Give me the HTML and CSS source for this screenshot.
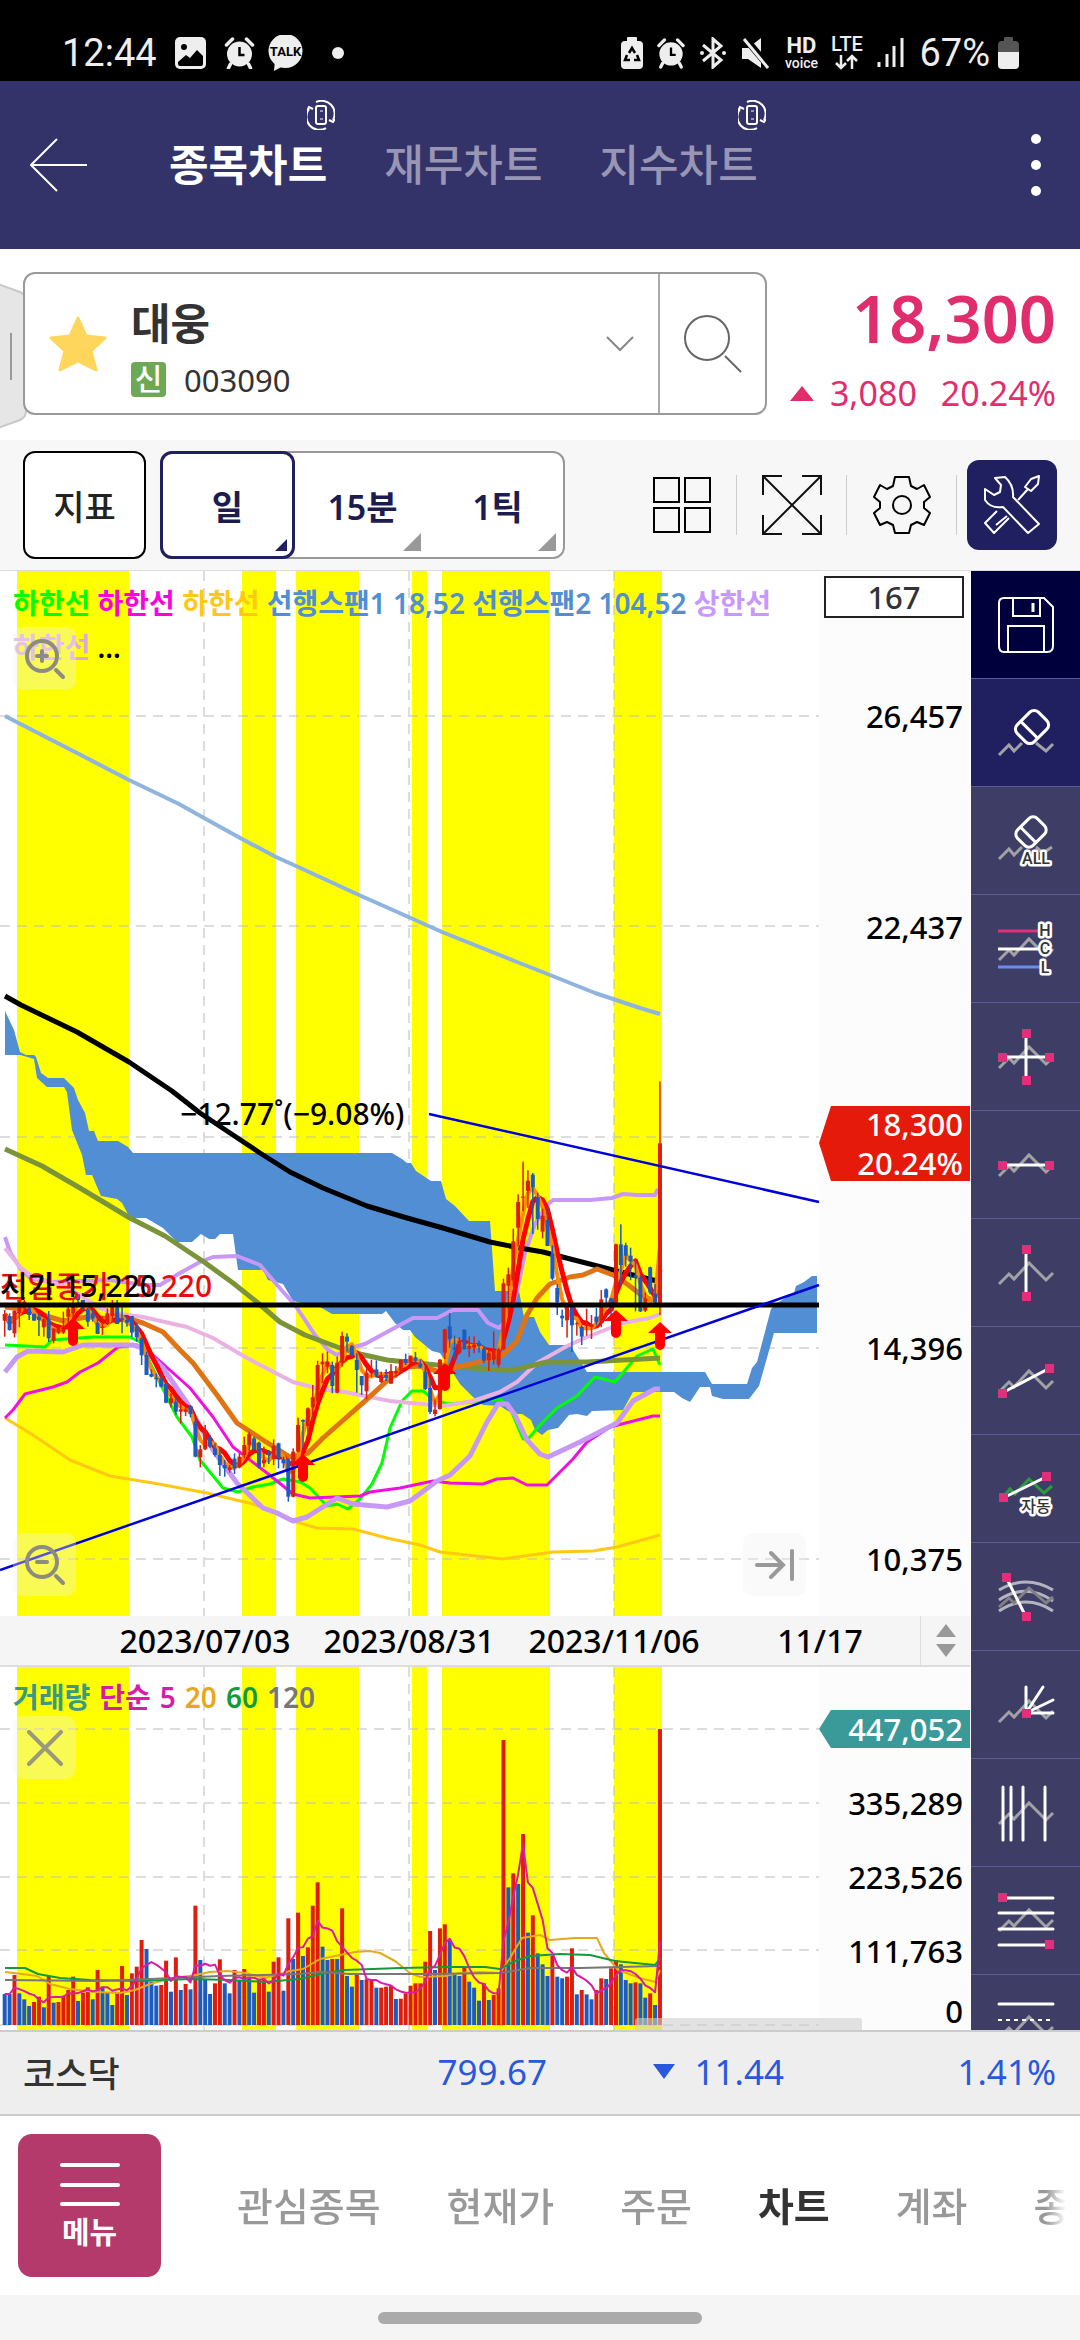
FILE: index.html
```html
<!DOCTYPE html>
<html lang="ko">
<head>
    <meta charset="UTF-8">
    <meta name="viewport" content="width=device-width, initial-scale=1.0">
    <title>종목차트</title>
    <link rel="stylesheet" href="styles.css">
</head>
<body>

    <!-- Shared icon shapes -->
    <svg class="defs" aria-hidden="true">
        <symbol id="alarm" viewBox="0 0 30 32">
            <circle cx="15" cy="17" r="12.5" fill="#eee"/>
            <path d="M2 8 8 2M28 8 22 2M6 27 4 31M24 27 26 31" stroke="#eee" stroke-width="3.5" stroke-linecap="round"/>
            <path d="M15 10V18H20" fill="none" stroke="#000" stroke-width="2.5"/>
        </symbol>
        <symbol id="rotate" viewBox="0 0 28 30">
            <g fill="none" stroke="#fff" stroke-width="2">
                <rect x="9" y="6" width="10" height="18" rx="2"/>
                <path d="M9 2A13 13 0 0 1 26 20M19 28A13 13 0 0 1 2 9M0 11 2 7 6 9M28 19 26 22 22 20"/>
                <path d="M13 11h3M13 19h3" stroke-width="1"/>
            </g>
        </symbol>
        <symbol id="zig" viewBox="0 0 56 56" overflow="visible">
            <path d="M1 39 11 29 16 34 31 18 48 35 55 28" fill="none" stroke="#a2a2a6" stroke-width="3"/>
        </symbol>
        <symbol id="dot" viewBox="0 0 9 9"><rect width="9" height="9" fill="#e0307a"/></symbol>
    </svg>

    <div class="status-bar">
        <span class="clock">12:44</span>
        <svg width="31" height="32" viewBox="0 0 31 32"><rect width="31" height="32" rx="5" fill="#eee"/><circle cx="9" cy="10" r="3" fill="#000"/><path d="M3 25 11 18 15 21 22 13 28 19V27Q28 29 26 29H5Q3 29 3 27Z" fill="#000"/></svg>
        <svg class="gap-wide" width="31" height="32"><use href="#alarm"/></svg>
        <svg width="37" height="36" viewBox="0 0 37 36"><circle cx="18.500" cy="16" r="17" fill="#eee"/><path d="M8 25 7 36 18 30Z" fill="#eee"/><text x="18.500" y="21" text-anchor="middle" font-family="Roboto" font-size="13" font-weight="700" fill="#000">TALK</text></svg>
        <svg class="gap-dot" width="12" height="12"><circle cx="6" cy="6" r="6" fill="#eee"/></svg>

        <div class="status-right">
            <svg width="22" height="32" viewBox="0 0 22 32"><path d="M6 4V1Q6 0 7 0H15Q16 0 16 1V4H18Q22 4 22 8V28Q22 32 18 32H4Q0 32 0 28V8Q0 4 4 4Z" fill="#eee"/><path d="M8 16 11 11 14 16M16 18 18 23H13M9 23H4L6 18" fill="none" stroke="#000" stroke-width="2.500"/></svg>
            <svg width="28" height="32"><use href="#alarm"/></svg>
            <svg width="28" height="32" viewBox="0 0 28 32"><path d="M4 8 22 23 14 30V2L22 9 4 24" fill="none" stroke="#eee" stroke-width="3"/><circle cx="3" cy="16" r="2" fill="#eee"/><circle cx="25" cy="16" r="2" fill="#eee"/></svg>
            <svg width="30" height="32" viewBox="0 0 30 32"><path d="M1 11H7L20 1V31L7 22H1Z" fill="#eee"/><path d="M3 0 29 31" stroke="#000" stroke-width="7"/><path d="M3 2 27 31" stroke="#eee" stroke-width="3"/></svg>
            <span class="hd"><b>HD</b><small>voice</small></span>
            <svg width="32" height="36" viewBox="0 0 32 36" overflow="visible"><text x="16" y="16" text-anchor="middle" font-family="Roboto" font-size="20" font-weight="500" fill="#eee">LTE</text><path d="M10 20V33M5 28 10 33 15 28M21 34V21M16 26 21 21 26 26" fill="none" stroke="#eee" stroke-width="2.500"/></svg>
            <svg width="28" height="32" viewBox="0 0 28 32"><path d="M2 25V30M10 17V30M17 9V30M25 1V30" stroke="#eee" stroke-width="3"/></svg>
            <span class="clock">67%</span>
            <svg width="21" height="32" viewBox="0 0 21 32"><path d="M6 4V1Q6 0 7 0H14Q15 0 15 1V4H17Q21 4 21 8V15H0V8Q0 4 4 4Z" fill="#555"/><path d="M0 15H21V28Q21 32 17 32H4Q0 32 0 28Z" fill="#eee"/></svg>
        </div>
    </div>

    <header class="header">
        <button class="icon-btn" aria-label="뒤로"><svg width="58" height="54" viewBox="0 0 58 54"><path d="M27 1 1 27 27 53M1 27H57" fill="none" stroke="#fff" stroke-width="2"/></svg></button>
        <nav class="tabs">
            <a href="#" class="tab active">종목차트<svg class="rotate" width="28" height="30"><use href="#rotate"/></svg></a>
            <a href="#" class="tab">재무차트</a>
            <a href="#" class="tab">지수차트<svg class="rotate" width="28" height="30"><use href="#rotate"/></svg></a>
        </nav>
        <button class="icon-btn more" aria-label="더보기"><svg width="12" height="64" viewBox="0 0 12 64"><g fill="#fff"><circle cx="6" cy="6" r="5"/><circle cx="6" cy="32" r="5"/><circle cx="6" cy="58" r="5"/></g></svg></button>
    </header>

    <section class="stock">
        <svg class="drawer" width="27" height="146" viewBox="0 0 27 146"><path d="M-2 1 20 9Q26 12 26 18V128Q26 134 20 137L-2 145Z" fill="#e6e6e6" stroke="#c8c8c8" stroke-width="2"/><path d="M11 50V97" stroke="#999" stroke-width="2"/></svg>
        <div class="stock-box">
            <button class="icon-btn star" aria-label="관심종목"><svg width="60" height="58" viewBox="0 0 60 58"><path d="M30 3 38 21 57 23 43 36 48 55 30 46 12 55 17 36 3 23 22 21Z" fill="#ffd65c" stroke="#ffd65c" stroke-width="3" stroke-linejoin="round"/></svg></button>
            <div class="stock-name">
                <strong>대웅</strong>
                <span><em>신</em>003090</span>
            </div>
            <button class="icon-btn chevron" aria-label="종목 목록"><svg width="28" height="16" viewBox="0 0 28 16"><path d="M1 1 14 14 27 1" fill="none" stroke="#888" stroke-width="2"/></svg></button>
            <button class="icon-btn search" aria-label="검색"><svg width="60" height="60" viewBox="0 0 60 60"><circle cx="24" cy="24" r="22" fill="none" stroke="#666" stroke-width="2"/><path d="M42 42 58 58" stroke="#666" stroke-width="2"/></svg></button>
        </div>
        <div class="price">
            <strong>18,300</strong>
            <span><svg width="24" height="15"><path d="M0 15 12 0 24 15Z" fill="#e02d6e"/></svg><i>3,080</i><i>20.24%</i></span>
        </div>
    </section>

    <section class="toolbar">
        <button class="btn-index">지표</button>
        <div class="periods">
            <button class="active">일</button>
            <button>15분</button>
            <button>1틱</button>
        </div>
        <div class="tool-icons">
            <button aria-label="분할"><svg width="58" height="58" viewBox="0 0 58 58"><path d="M1 2H26V26H1ZM32 2H57V26H32ZM1 32H26V56H1ZM32 32H57V56H32Z" fill="none" stroke="#000" stroke-width="2"/></svg></button>
            <button aria-label="전체화면"><svg width="60" height="60" viewBox="0 0 60 60"><path d="M1 20V1H20M40 1H59V20M59 40V59H40M20 59H1V40M1 1 59 59M59 1 1 59" fill="none" stroke="#111" stroke-width="2"/></svg></button>
            <button aria-label="설정"><svg width="58" height="60" viewBox="0 0 58 60"><path d="M22 2H36L38 11 44 14 51 10 57 22 51 27V33L57 38 51 50 44 47 38 50 36 58H22L20 50 14 47 7 50 1 38 7 33V27L1 22 7 10 14 14 20 11Z" fill="none" stroke="#000" stroke-width="2" stroke-linejoin="round"/><circle cx="29" cy="30" r="9" fill="none" stroke="#000" stroke-width="2"/></svg></button>
        </div>
        <button class="btn-tools" aria-label="도구"><svg width="58" height="60" viewBox="0 0 58 60"><g fill="none" stroke="#fff" stroke-width="2" stroke-linejoin="round"><path d="M12 3 22 2Q31 10 30 22L56 49 45 58 20 32Q8 34 2 25V14L11 20 17 17 18 10Z"/><path d="M48 4 56 1 55 9 48 16 42 12ZM45 14 35 25M14 36 2 48 11 58 26 43M24 41 13 50"/></g></svg></button>
    </section>

    <main class="workspace">
        <div class="charts">
            <div class="pane">
                <svg class="chart" id="priceChart" viewBox="0 571 970 1045">
                    <rect x="819" y="571" width="151" height="1045" fill="#fcfcfc"/>
                    <g class="bands"></g>
                    <g class="grid">
                        <path d="M0 716H819M0 926H819M0 1137H819M0 1348H819M0 1559H819M204 571V1616M409 571V1616M614 571V1616"/>
                    </g>
                    <!-- cloud -->
                    <path fill="#518ed4" d="M5 1011 14 1030 20 1052 26 1055 34 1055 36 1057 41 1073 48 1078 64 1078 74 1088 78 1100 85 1113 89 1131 94 1131 98 1141 118 1141 128 1147 133 1153 392 1153 402 1159 407 1163 411 1163 416 1171 431 1181 441 1181 446 1199 455 1206 469 1221 490 1221 495 1291 519 1291 524 1317 534 1317 540 1332 549 1345 570 1345 587 1372 705 1372 712 1384 747 1384 752 1368 757 1362 771 1309 777 1303 794 1293 796 1286 804 1282 812 1276 817 1276 817 1333 774 1333 759 1386 749 1399 723 1399 712 1396 710 1387 700 1387 690 1402 682 1398 674 1392 633 1392 623 1410 592 1411 587 1416 577 1414 569 1415 558 1428 548 1430 542 1435 535 1430 531 1420 522 1414 513 1414 500 1406 483 1405 473 1397 460 1384 453 1373 440 1353 432 1351 415 1337 410 1330 403 1330 395 1323 386 1311 382 1314 332 1314 320 1307 293 1301 283 1284 268 1280 263 1270 238 1270 233 1234 220 1234 215 1239 209 1239 201 1234 192 1242 177 1242 163 1228 146 1218 130 1218 122 1203 117 1199 101 1196 92 1175 86 1175 82 1155 72 1130 68 1100 67 1092 64 1087 47 1087 37 1078 34 1059 24 1056 20 1055 5 1055Z"/>
                    <g class="lines">
                        <polyline stroke="#8fb4dd" stroke-width="4" points="5,716 38,733 77,753 129,780 179,804 204,818 242,839 276,857 296,866 359,895 413,919 442,932 517,962 540,971 595,993 640,1008 660,1014"/>
                        <polyline stroke="#ffc814" stroke-width="3" points="5,1418 33,1435 70,1460 110,1476 153,1483 207,1493 253,1504 277,1513 293,1521 317,1528 353,1529 387,1538 420,1545 440,1552 503,1559 553,1552 593,1551 617,1547 660,1535"/>
                        <polyline stroke="#00ff00" stroke-width="3" points="5,1345 45,1347 52,1340 93,1337 130,1337 140,1342 157,1377 177,1417 192,1437 200,1460 223,1488 238,1492 253,1487 270,1484 283,1479 300,1482 310,1488 327,1506 337,1504 348,1509 360,1499 372,1484 382,1463 390,1428 402,1401 412,1391 423,1391 433,1399 447,1404 473,1402 500,1399 510,1408 523,1439 528,1439 540,1425 557,1408 577,1396 595,1377 615,1382 637,1356 653,1349 660,1365"/>
                        <polyline stroke="#f010e0" stroke-width="3" points="5,1418 13,1410 25,1394 53,1387 67,1382 80,1372 98,1363 118,1347 137,1345 153,1355 190,1388 213,1417 233,1447 267,1473 293,1494 310,1498 360,1496 370,1492 400,1488 433,1481 450,1483 483,1484 497,1479 513,1478 527,1485 547,1485 573,1459 587,1442 610,1427 653,1416 660,1416"/>
                        <polyline stroke="#c898f6" stroke-width="4" points="5,1237 10,1252 20,1268 30,1278 50,1282 110,1280 143,1285 160,1285 180,1273 200,1262 213,1257 237,1256 260,1265 277,1285 295,1305 315,1335 328,1350 337,1355 350,1348 365,1344 387,1332 413,1318 437,1318 453,1310 478,1310 488,1323 499,1328 507,1320 517,1291 525,1253 535,1224 547,1205 553,1200 590,1200 612,1198 623,1194 637,1195 655,1195 658,1189"/>
                        <polyline stroke="#c898f6" stroke-width="5" points="5,1372 17,1357 28,1351 63,1352 83,1345 133,1345 143,1348 163,1368 187,1403 213,1450 237,1483 263,1508 277,1513 293,1521 307,1517 337,1498 353,1504 387,1507 410,1501 437,1481 450,1475 470,1456 487,1422 498,1404 507,1404 515,1415 527,1440 540,1454 548,1457 580,1442 617,1423 633,1401 655,1389 660,1389"/>
                        <polyline stroke="#eab2e2" stroke-width="4" points="5,1248 20,1267 33,1277 67,1287 100,1308 113,1313 143,1317 187,1327 213,1338 247,1358 293,1382 320,1389 345,1392 390,1401 443,1406 473,1401 500,1392 517,1382 537,1363 567,1346 587,1337 623,1323 650,1318 660,1314"/>
                        <polyline stroke="#7b9438" stroke-width="5" points="5,1149 42,1166 80,1188 130,1218 165,1236 204,1262 233,1283 258,1303 280,1322 305,1335 340,1348 360,1354 387,1360 417,1363 457,1367 500,1370 513,1370 547,1362 587,1362 660,1358"/>
                        <polyline stroke="#000" stroke-width="5" points="5,996 21,1005 77,1032 129,1062 172,1091 200,1113 230,1133 260,1153 290,1172 323,1188 367,1206 407,1218 443,1228 490,1242 520,1248 543,1252 613,1270 657,1281"/>
                        <polyline stroke="#e07414" stroke-width="5" points="5,1307 23,1309 43,1315 63,1321 87,1317 133,1320 143,1323 163,1332 180,1350 193,1363 217,1395 237,1423 263,1440 290,1457 308,1453 323,1438 340,1423 365,1401 388,1380 407,1367 420,1366 440,1372 457,1367 483,1361 503,1355 517,1341 527,1315 537,1298 550,1284 570,1277 583,1275 597,1269 613,1275 627,1284 640,1294 653,1301"/>
                        <polyline id="ma5" stroke="#ff0000" stroke-width="5"/>
                    </g>
                    <polyline id="ma3" class="overlay-line" stroke="#ff8c00" stroke-width="4"/>
                    <g id="candles"></g>
                    <path d="M0 1305H819" stroke="#000" stroke-width="5"/>
                    <path d="M0 1570 819 1285M429 1114 819 1202" stroke="#0000d8" stroke-width="2.500"/>
                    <g id="arrows" fill="#ff0000"></g>
                    <g class="note-text">
                        <text x="0" y="1297" fill="#e80c0c">전일종가 15,220</text>
                        <text x="0" y="1297">시가 15,220</text>
                        <text x="180" y="1125">−12.77˚(−9.08%)</text>
                    </g>
                    <g class="axis-text">
                        <text x="963" y="728">26,457</text>
                        <text x="963" y="939">22,437</text>
                        <text x="963" y="1360">14,396</text>
                        <text x="963" y="1571">10,375</text>
                    </g>
                    <path d="M819 1143 831 1106H970V1181H831Z" fill="#e61a0a"/>
                    <g class="axis-text" fill="#fff">
                        <text x="963" y="1136">18,300</text>
                        <text x="963" y="1175">20.24%</text>
                    </g>
                </svg>
                <p class="legend">
                    <span class="c-green">하한선</span> <span class="c-magenta">하한선</span> <span class="c-gold">하한선</span> <span class="c-blue">선행스팬1 18,52 선행스팬2 104,52</span> <span class="c-purple">상한선</span><br>
                    <span class="c-pink">하한선</span> ...
                </p>
                <input class="bar-count" type="text" value="167" aria-label="봉 개수">
                <button class="float-btn zoom-in" aria-label="확대"><svg width="44" height="44" viewBox="0 0 44 44"><g fill="none" stroke="#8c8c80" stroke-width="4" stroke-linecap="round"><circle cx="19" cy="19" r="15"/><path d="M33 33 40 40M14 19H24M19 14V24"/></g></svg></button>
                <button class="float-btn zoom-out" aria-label="축소"><svg width="44" height="44" viewBox="0 0 44 44"><g fill="none" stroke="#8c8c80" stroke-width="4" stroke-linecap="round"><circle cx="19" cy="19" r="15"/><path d="M33 33 40 40M14 19H24"/></g></svg></button>
                <button class="float-btn to-end" aria-label="끝으로"><svg width="40" height="32" viewBox="0 0 40 32"><path d="M2 16H28M16 4 28 16 16 28M37 2V30" fill="none" stroke="#999" stroke-width="4" stroke-linecap="round"/></svg></button>
            </div>

            <div class="dates">
                <svg class="chart" viewBox="0 0 970 50">
                    <g class="date-text">
                        <text x="205" y="37">2023/07/03</text>
                        <text x="409" y="37">2023/08/31</text>
                        <text x="614" y="37">2023/11/06</text>
                        <text x="820" y="37">11/17</text>
                    </g>
                </svg>
                <button class="spin" aria-label="높이 조절"><svg width="20" height="34" viewBox="0 0 20 34"><path d="M0 13 10 0 20 13ZM0 20H20L10 33Z" fill="#999"/></svg></button>
            </div>

            <div class="pane">
                <svg class="chart" id="volumeChart" viewBox="0 1667 970 363">
                    <rect x="819" y="1667" width="151" height="363" fill="#fcfcfc"/>
                    <g class="bands"></g>
                    <g class="grid">
                        <path d="M0 1729H819M0 1803H819M0 1877H819M0 1950H819M0 2025H819M204 1667V2031M409 1667V2031M614 1667V2031"/>
                    </g>
                    <g id="volumes"></g>
                    <g class="lines">
                        <polyline stroke="#e8a81e" stroke-width="2" points="5,1972 22,1974 37,1976 50,1984 70,1989 95,1992 120,1993 135,1990 150,1984 165,1980 195,1975 210,1972 228,1971 245,1973 265,1978 290,1971 303,1969 320,1959 340,1955 355,1952 370,1951 380,1953 395,1961 410,1973 420,1977 445,1976 460,1973 480,1972 500,1973 510,1958 522,1938 540,1935 550,1940 575,1938 597,1938 604,1953 618,1970 640,1978 655,1982 660,1970"/>
                        <polyline stroke="#129a3c" stroke-width="2" points="5,1968 25,1968 38,1974 60,1978 90,1980 140,1981 190,1979 230,1980 265,1982 300,1979 325,1973 345,1970 400,1968 450,1967 485,1967 500,1969 515,1961 530,1956 560,1954 590,1955 615,1961 655,1965 660,1959"/>
                        <polyline stroke="#777" stroke-width="2" points="5,1980 100,1981 150,1979 220,1976 300,1974 320,1972 350,1974 430,1974 500,1973 530,1968 580,1968 660,1966"/>
                        <polyline id="vma5" stroke="#d81ca8" stroke-width="2"/>
                    </g>
                    <g class="axis-text">
                        <text x="963" y="1815">335,289</text>
                        <text x="963" y="1889">223,526</text>
                        <text x="963" y="1963">111,763</text>
                        <text x="963" y="2023">0</text>
                    </g>
                    <path d="M819 1729 831 1710H970V1748H831Z" fill="#3a9a9a"/>
                    <g class="axis-text" fill="#fff"><text x="963" y="1741">447,052</text></g>
                    <rect x="635" y="2018" width="227" height="14" rx="3" fill="#cfcfcf" fill-opacity=".6"/>
                </svg>
                <p class="legend legend-volume">
                    <span class="c-teal">거래량</span> <span class="c-rose">단순</span> <span class="c-rose">5</span> <span class="c-amber">20</span> <span class="c-forest">60</span> <span class="c-gray">120</span>
                </p>
                <button class="float-btn close" aria-label="닫기"><svg width="36" height="36" viewBox="0 0 36 36"><path d="M2 2 34 34M34 2 2 34" stroke="#999980" stroke-width="4" stroke-linecap="round"/></svg></button>
            </div>
        </div>

        <!-- Drawing tools -->
        <aside class="side-tools">
            <button class="save" aria-label="저장"><svg viewBox="0 0 56 56"><g fill="none" stroke="#fff" stroke-width="2"><path d="M6 1H46L55 10V49Q55 55 49 55H6Q1 55 1 49V6Q1 1 6 1Z"/><path d="M15 1V19H42V1M10 55V29H46V55"/></g><path d="M35 6V15" stroke="#fff" stroke-width="3"/></svg></button>
            <button class="on" aria-label="지우기"><svg viewBox="0 0 56 56"><path d="M1 50 11 40 16 46 24 38M38 38 48 46 55 39" fill="none" stroke="#a2a2a6" stroke-width="3"/><g fill="none" stroke="#fff" stroke-width="3" transform="rotate(-45 34 22)"><rect x="19" y="10" width="30" height="24" rx="6"/><path d="M30 10V34"/></g></svg></button>
            <button aria-label="모두 지우기"><svg viewBox="0 0 56 56"><path d="M1 46 11 36 16 42 24 34M38 34 45 40 54 34" fill="none" stroke="#a2a2a6" stroke-width="3"/><g fill="none" stroke="#fff" stroke-width="3" transform="rotate(-45 33 19)"><rect x="19" y="8" width="28" height="22" rx="6"/><path d="M29 8V30"/></g><text class="tag" x="38" y="51">ALL</text></svg></button>
            <button aria-label="고가 종가 저가"><svg viewBox="0 0 56 56"><use href="#zig"/><path d="M0 10H42" stroke="#e0307a" stroke-width="3"/><path d="M0 28H42" stroke="#fff" stroke-width="3"/><path d="M0 46H42" stroke="#6a8cf0" stroke-width="3"/><text class="tag" x="47" y="15">H</text><text class="tag" x="47" y="33">C</text><text class="tag" x="47" y="52">L</text></svg></button>
            <button aria-label="십자선"><svg viewBox="0 0 56 56"><use href="#zig"/><path d="M28 4V52M4 28H52" stroke="#fff" stroke-width="3"/><use href="#dot" x="24" y="0" width="9" height="9"/><use href="#dot" x="24" y="47" width="9" height="9"/><use href="#dot" x="0" y="24" width="9" height="9"/><use href="#dot" x="47" y="24" width="9" height="9"/></svg></button>
            <button aria-label="수평선"><svg viewBox="0 0 56 56"><use href="#zig"/><path d="M4 28H52" stroke="#fff" stroke-width="3"/><use href="#dot" x="0" y="24" width="9" height="9"/><use href="#dot" x="47" y="24" width="9" height="9"/></svg></button>
            <button aria-label="수직선"><svg viewBox="0 0 56 56"><use href="#zig"/><path d="M28 4V52" stroke="#fff" stroke-width="3"/><use href="#dot" x="24" y="0" width="9" height="9"/><use href="#dot" x="24" y="47" width="9" height="9"/></svg></button>
            <button aria-label="추세선"><svg viewBox="0 0 56 56"><use href="#zig"/><path d="M4 40 52 15" stroke="#fff" stroke-width="3"/><use href="#dot" x="0" y="36" width="9" height="9"/><use href="#dot" x="47" y="11" width="9" height="9"/></svg></button>
            <button aria-label="자동 추세선"><svg viewBox="0 0 56 56"><path d="M5 36 12 28 17 33 31 18 46 32 54 25" fill="none" stroke="#2c9a3c" stroke-width="3"/><path d="M5 37 48 16" stroke="#fff" stroke-width="3"/><use href="#dot" x="1" y="32" width="9" height="9"/><use href="#dot" x="44" y="11" width="9" height="9"/><text class="tag ko" x="38" y="51">자동</text></svg></button>
            <button aria-label="피보나치 아크"><svg viewBox="0 0 56 56"><g fill="none" stroke="#b4b4c0" stroke-width="3"><path d="M1 21Q28 5 55 21M1 31Q28 13 55 32M1 42Q28 24 55 42"/></g><path d="M1 38 11 29 16 34 31 19 48 34 55 28" fill="none" stroke="#808084" stroke-width="3"/><path d="M8 8 28 48" stroke="#fff" stroke-width="3"/><use href="#dot" x="4" y="4" width="9" height="9"/><use href="#dot" x="24" y="43" width="9" height="9"/></svg></button>
            <button aria-label="피보나치 팬"><svg viewBox="0 0 56 56"><use href="#zig" y="6"/><path d="M28 36V10M28 36 45 10M28 36 55 23M28 36H55" stroke="#fff" stroke-width="3" stroke-linecap="round"/><use href="#dot" x="24" y="32" width="9" height="9"/></svg></button>
            <button aria-label="피보나치 타임존"><svg viewBox="0 0 56 56"><use href="#zig"/><path d="M5 2V55M13 2V55M25 2V55M47 2V55" stroke="#fff" stroke-width="3" stroke-linecap="round"/></svg></button>
            <button aria-label="되돌림"><svg viewBox="0 0 56 56"><use href="#zig" y="-1"/><path d="M4 5H55M1 20H55M1 36H55M1 52H52" stroke="#fff" stroke-width="3" stroke-linecap="round"/><use href="#dot" x="0" y="0" width="9" height="9"/><use href="#dot" x="47" y="47" width="9" height="9"/></svg></button>
            <button aria-label="채널"><svg viewBox="0 0 56 56"><use href="#zig" y="-2"/><path d="M1 3H55" stroke="#fff" stroke-width="3" stroke-linecap="round"/><path d="M0 19H54" stroke="#fff" stroke-width="2" stroke-dasharray="4 4"/></svg></button>
        </aside>
    </main>

    <section class="index-bar">
        <span class="index-name">코스닥</span>
        <span class="index-value">799.67</span>
        <span class="index-diff"><svg width="22" height="15"><path d="M0 0H22L11 15Z" fill="#2858dc"/></svg>11.44</span>
        <span class="index-rate">1.41%</span>
    </section>

    <footer class="bottom-nav">
        <button class="menu-btn"><svg width="60" height="46" viewBox="0 0 60 46"><path d="M2 3H58M2 23H58M2 42H58" stroke="#fff" stroke-width="4" stroke-linecap="round"/></svg>메뉴</button>
        <nav class="links">
            <a href="#">관심종목</a>
            <a href="#">현재가</a>
            <a href="#">주문</a>
            <a href="#" class="active">차트</a>
            <a href="#">계좌</a>
            <a href="#">종</a>
        </nav>
    </footer>
    <div class="home-bar"><span></span></div>

    <script>
        // One row per day: direction, high, body top, body bottom, low (3 steps = 1px, from y 1100)
        const candles = `r630,642,662,710 b640,648,690,692 r632,632,700,712 r600,600,640,682 r600,605,625,630 b620,625,645,660 b640,642,662,662 b640,650,660,708 r655,658,682,710
            b633,658,715,726 r685,686,722,730 r680,683,698,702 r635,680,698,702 r618,626,650,690 r600,610,640,690 b583,583,600,620 b600,600,620,628 b622,628,665,680
            b630,640,655,665 b645,668,702,702 r650,680,684,705 r625,640,672,675 r600,620,648,665 b600,622,672,672 b622,655,660,700 b648,660,668,680 b648,648,698,712
            b668,680,712,725 b712,715,766,795 b755,765,825,825 b808,822,830,832 b820,833,838,862 b820,835,860,862 b850,852,908,910 r880,895,910,922 b890,905,935,945
            r900,928,935,970 r920,928,935,948 b915,918,942,952 b950,965,1070,1072 r1035,1048,1072,1102 r975,990,1048,1050 b1005,1012,1040,1044 b1030,1045,1065,1070
            b1050,1065,1095,1128 b1080,1095,1105,1130 r1095,1102,1110,1118 b1060,1076,1105,1122 r1060,1070,1102,1105 r1010,1035,1065,1075 r995,1002,1035,1055
            b1010,1015,1048,1052 b1025,1028,1100,1105 r1040,1080,1090,1102 b1050,1060,1065,1092 r1018,1038,1078,1095 b1028,1030,1075,1105 b1070,1078,1090,1105
            b1075,1078,1190,1205 r1045,1055,1190,1192 r953,975,1055,1058 b958,960,965,1045 r922,925,978,1000 r855,892,922,960 r782,795,905,920 r760,785,793,850
            r755,785,800,820 b785,795,858,880 r770,788,878,880 r695,708,788,800 b700,710,725,755 b735,738,765,770 b760,780,810,878 b828,828,856,885 r805,818,874,898
            r779,815,820,831 b781,808,827,831 r815,825,846,849 b808,825,833,843 r792,813,851,851 r798,813,820,833 r779,779,820,822 b761,777,789,795 r767,767,789,789
            b756,772,782,789 b779,791,802,805 b800,815,867,870 b836,864,936,942 r898,929,942,949 r777,779,927,929 r686,688,758,777 b639,679,717,743 b707,743,748,779
            r712,722,758,763 b689,689,748,748 r709,738,746,771 r709,735,743,760 b722,729,738,758 b738,746,782,789 r748,758,781,813 r694,750,779,794 r743,748,794,802
            r536,550,748,750 r503,523,557,645 r386,424,541,562 r283,306,383,438 r185,290,293,333 r211,242,273,324 b219,224,262,402 b278,291,357,389 r326,347,395,415
            b324,360,438,438 b436,461,536,541 b552,564,606,645 b629,647,655,681 r619,622,661,713 b622,622,676,756 r665,670,673,707 b676,681,710,735 r626,671,678,707
            r645,673,681,717 b624,650,667,676 r570,598,663,681 b565,568,593,614 b593,595,610,650 r431,433,614,619 b373,433,495,557 b428,436,467,500 b443,467,484,541
            b479,526,533,634 b526,533,634,636 r577,595,632,636 b500,502,577,583 b552,581,608,619 r-56,130,614,645`.split(/\s+/);

        // Top of each volume bar (3 steps = 1px, from y 1600), base line is 1275
        const volumes = `b1182 b1182 r1125 b1180 b1198 b1218 r1206 r1190 b1222 r1127 b1208 r1206 r1187 r1170 r1130 b1203 r1178 r1162 b1198 r1110 b1160 b1178 b1215 r1178 r1098
            b1185 r1120 r1100 r1020 b1047 b1145 b1157 r1155 r1082 b1175 r1072 b1170 r1152 b1168 r917 b1080 b1140 b1182 r1150 r1078 b1150 b1180 r1110 b1140 r1107 b1130 b1178
            r1140 r1130 b1175 r1085 r1072 b1172 r955 b1077 r938 b1068 r1042 r917 r847 b1040 b1080 r1077 b1077 r925 b1128 b1160 r1120 b1140 r1138 r1140 b1163 r1163 r1160
            r1157 b1197 r1196 r1180 r1157 r1150 r1150 r1085 r993 b1110 r985 r973 b1020 b1125 b1128 r1100 b1145 b1163 b1202 r1150 b1200 r1185 r1165 r420 b862 r820 b852 r702
            b998 r946 b1060 b1093 b1128 r1067 b1130 b1135 r1130 r1045 b1183 r1170 b1183 b1198 r1170 r1135 b1137 r1105 r1080 b1093 b1140 b1150 r1147 b1150 b1193 r1180
            b1215 r387`.split(/\s+/);

        const bands = [[17, 129], [242, 276], [296, 359], [412, 427], [442, 550], [614, 662]];
        const arrows = [[73, 1318], [303, 1454], [445, 1363], [616, 1310], [660, 1322]];
        const colors = { r: '#e01c0c', b: '#1c5cc0' };
        const xAt = i => 4.7 + i * 4.89;

        function average(values, n) {
            return values.map((v, i) => {
                const part = values.slice(Math.max(0, i - n + 1), i + 1);
                return part.reduce((a, b) => a + b, 0) / part.length;
            });
        }

        function toPoints(values, top) {
            return values.map((v, i) => `${xAt(i).toFixed(1)},${(top + v / 3).toFixed(1)}`).join(' ');
        }

        document.querySelectorAll('.bands').forEach(g => {
            g.innerHTML = bands.map(([a, b]) => `<rect x="${a}" y="571" width="${b - a}" height="1460"/>`).join('');
        });

        const closes = [];
        document.getElementById('candles').innerHTML = candles.map((c, i) => {
            const [hi, top, bottom, lo] = c.slice(1).split(',').map(v => 1100 + v / 3);
            const x = xAt(i);
            closes.push(((c[0] === 'r' ? top : bottom) - 1100) * 3);
            return `<g fill="${colors[c[0]]}"><rect x="${x - 0.75}" y="${hi}" width="1.5" height="${lo - hi}"/><rect x="${x - 2}" y="${top}" width="4" height="${Math.max(1, bottom - top)}"/></g>`;
        }).join('');
        document.getElementById('ma3').setAttribute('points', toPoints(average(closes, 3), 1100));
        document.getElementById('ma5').setAttribute('points', toPoints(average(closes, 5), 1100));

        document.getElementById('volumes').innerHTML = volumes.map((v, i) => {
            const y = 1600 + v.slice(1) / 3;
            return `<rect x="${xAt(i) - 2}" y="${y}" width="4" height="${2025 - y}" fill="${colors[v[0]]}"/>`;
        }).join('');
        document.getElementById('vma5').setAttribute('points', toPoints(average(volumes.map(v => +v.slice(1)), 5), 1600));

        document.getElementById('arrows').innerHTML = arrows.map(([x, y]) =>
            `<path d="M${x} ${y}l12 11h-7v12a5 5 0 0 1-10 0v-12h-7z"/>`).join('');
    </script>

</body>
</html>
```
FILE: styles.css
```css
* {
    box-sizing: border-box;
}

body {
    margin: 0;
    background-color: #fff;
    color: #333;
    font-family: "Noto Sans", "Noto Sans CJK KR", sans-serif;
}

button {
    margin: 0;
    padding: 0;
    border: none;
    background: none;
    color: inherit;
    font-family: inherit;
    cursor: pointer;
}

a {
    color: inherit;
    text-decoration: none;
}

svg {
    display: block;
    flex: none;
}

.defs {
    position: absolute;
    width: 0;
    height: 0;
}

.icon-btn {
    display: flex;
    align-items: center;
    justify-content: center;
}

/* Status bar */
.status-bar {
    display: flex;
    align-items: center;
    height: 81px;
    padding: 24px 61px 0 62px;
    gap: 12px;
    background-color: #000;
    color: #eee;
    font-family: Roboto, sans-serif;
}

.clock {
    font-size: 38px;
    line-height: 44px;
}

.status-bar .clock:first-child {
    margin-right: 6px;
}

.gap-wide {
    margin-left: 6px;
}

.gap-dot {
    margin-left: 16px;
}

.status-right {
    display: flex;
    align-items: center;
    gap: 14px;
    margin-left: auto;
}

.status-right .clock {
    margin-right: -6px;
}

.hd {
    display: flex;
    flex-direction: column;
    align-items: center;
    width: 32px;
}

.hd b {
    font-size: 22px;
    line-height: 20px;
}

.hd small {
    font-size: 14px;
    line-height: 14px;
    font-weight: 500;
}

/* Header */
.header {
    display: flex;
    align-items: center;
    height: 168px;
    padding: 0 38px 0 30px;
    background-color: #333369;
    color: #fff;
}

.tabs {
    display: flex;
    gap: 57px;
    margin-left: 81px;
}

.tab {
    position: relative;
    font-size: 43px;
    line-height: 60px;
    font-weight: 500;
    color: #9896b4;
}

.tab.active {
    font-weight: 700;
    color: #fff;
}

.rotate {
    position: absolute;
    right: -8px;
    top: -35px;
}

.more {
    margin-left: auto;
}

/* Stock summary */
.stock {
    position: relative;
    display: flex;
    height: 191px;
    padding: 23px 24px 0 23px;
}

.drawer {
    position: absolute;
    left: 0;
    top: 34px;
}

.stock-box {
    position: relative;
    display: flex;
    width: 744px;
    height: 143px;
    border: 2px solid #999;
    border-radius: 12px;
    background-color: #fff;
}

.star {
    width: 106px;
}

.stock-name {
    display: flex;
    flex-direction: column;
    justify-content: center;
    flex: 1;
    gap: 8px;
    padding-top: 8px;
}

.stock-name strong {
    font-size: 43px;
    line-height: 56px;
    font-weight: 700;
}

.stock-name span {
    display: flex;
    align-items: center;
    gap: 18px;
    font-size: 31px;
    line-height: 40px;
}

.stock-name em {
    width: 35px;
    height: 35px;
    border-radius: 4px;
    background-color: #6da854;
    color: #fff;
    font-size: 30px;
    line-height: 34px;
    font-style: normal;
    font-weight: 500;
    text-align: center;
}

.chevron {
    width: 76px;
}

.search {
    width: 107px;
    border-left: 2px solid #aaa;
}

.price {
    flex: 1;
    color: #e02d6e;
    text-align: right;
}

.price strong {
    display: block;
    font-size: 65px;
    line-height: 92px;
    font-weight: 600;
}

.price span {
    display: flex;
    align-items: center;
    justify-content: flex-end;
    gap: 16px;
    font-size: 34px;
    line-height: 58px;
}

.price i {
    font-style: normal;
}

.price i + i {
    margin-left: 8px;
}

/* Toolbar */
.toolbar {
    display: flex;
    align-items: center;
    height: 131px;
    padding: 0 23px;
    border-bottom: 1px solid #ddd;
    background-color: #f7f7f7;
}

.btn-index {
    width: 123px;
    height: 108px;
    border: 2px solid #000;
    border-radius: 12px;
    background-color: #fff;
    color: #222;
    font-size: 34px;
    font-weight: 500;
}

.periods {
    display: flex;
    margin-left: 14px;
    border-radius: 12px;
    background-color: #fff;
    box-shadow: inset 0 0 0 2px #999;
}

.periods button {
    position: relative;
    width: 135px;
    height: 108px;
    border-radius: 12px;
    color: #1c1c50;
    font-size: 34px;
    font-weight: 600;
}

.periods button::after {
    content: "";
    position: absolute;
    right: 9px;
    bottom: 8px;
    border-left: 18px solid transparent;
    border-bottom: 18px solid #999;
}

.periods .active {
    border: 3px solid #202060;
}

.periods .active::after {
    right: 5px;
    bottom: 5px;
    border-left-width: 12px;
    border-bottom: 12px solid #202060;
}

.tool-icons {
    display: flex;
    margin-left: auto;
}

.tool-icons button {
    display: flex;
    justify-content: center;
    align-items: center;
    width: 110px;
    height: 60px;
    border-right: 1px solid #ccc;
}

.btn-tools {
    display: flex;
    justify-content: center;
    align-items: center;
    width: 90px;
    height: 90px;
    margin-left: 10px;
    border-radius: 12px;
    background-color: #202060;
}

/* Charts */
.workspace {
    display: grid;
    grid-template-columns: 1fr 109px;
    gap: 1px;
}

.pane,
.dates {
    position: relative;
}

.chart {
    width: 100%;
    font-size: 32px;
    font-weight: 500;
}

.bands rect {
    fill: #ffff00;
}

.grid path {
    fill: none;
    stroke: #bbb;
    stroke-opacity: 0.5;
    stroke-width: 2;
    stroke-dasharray: 10 7;
}

.lines polyline,
.overlay-line {
    fill: none;
    stroke-linejoin: round;
}

.note-text {
    font-size: 30px;
}

.axis-text {
    font-size: 31px;
    text-anchor: end;
}

.date-text {
    text-anchor: middle;
}

.dates {
    height: 51px;
    border-bottom: 2px solid #ddd;
    background-color: #f5f5f5;
}

.spin {
    position: absolute;
    right: 0;
    top: 0;
    display: flex;
    justify-content: center;
    align-items: center;
    width: 50px;
    height: 100%;
    border-left: 1px solid #ddd;
}

.legend {
    position: absolute;
    left: 13px;
    top: 10px;
    margin: 0;
    color: #000;
    font-size: 28px;
    line-height: 44px;
    font-weight: 600;
    white-space: nowrap;
}

.legend-volume {
    display: flex;
    gap: 9px;
    top: 8px;
}

.c-green { color: #00ff00; }
.c-magenta { color: #ff00e0; }
.c-gold { color: #ffc814; }
.c-blue { color: #518ed4; }
.c-purple { color: #c898ff; }
.c-pink { color: #dcaae0; }
.c-teal { color: #3a9a80; }
.c-rose { color: #d81ca8; }
.c-amber { color: #e8a81e; }
.c-forest { color: #129a3c; }
.c-gray { color: #777; }

.bar-count {
    position: absolute;
    right: 6px;
    top: 5px;
    width: 140px;
    height: 42px;
    padding: 0;
    border: 2px solid #222;
    background-color: #fff;
    color: #333;
    font-family: inherit;
    font-size: 31px;
    font-weight: 500;
    text-align: center;
}

.float-btn {
    position: absolute;
    left: 13px;
    display: flex;
    justify-content: center;
    align-items: center;
    width: 63px;
    height: 63px;
    border-radius: 10px;
    background-color: rgba(240, 240, 240, 0.35);
}

.zoom-in {
    top: 56px;
}

.zoom-out {
    bottom: 20px;
}

.to-end {
    left: auto;
    right: 164px;
    bottom: 20px;
}

.close {
    top: 49px;
}

/* Drawing tools */
.side-tools {
    display: flex;
    flex-direction: column;
    height: 0;
    min-height: 100%;
    overflow: hidden;
    background-color: #3d3d66;
}

.side-tools button {
    display: flex;
    justify-content: center;
    align-items: center;
    flex: 0 0 108px;
    border-bottom: 1px solid #5c5c94;
}

.side-tools svg {
    width: 56px;
    height: 56px;
    overflow: visible;
}

.side-tools .save {
    background-color: #00003c;
}

.side-tools .on {
    background-color: #202060;
}

.tag {
    fill: #333;
    stroke: #fff;
    stroke-width: 5px;
    stroke-linejoin: round;
    paint-order: stroke;
    font-family: Roboto, "Noto Sans CJK KR", sans-serif;
    font-size: 16px;
    font-weight: 500;
    text-anchor: middle;
}

/* Index bar */
.index-bar {
    display: grid;
    grid-template-columns: 300px 224px 237px 1fr;
    align-items: center;
    height: 86px;
    padding: 0 24px 4px 23px;
    border-top: 2px solid #ccc;
    border-bottom: 2px solid #ccc;
    background-color: #eee;
    color: #2858dc;
    font-size: 35px;
    text-align: right;
}

.index-name {
    color: #333;
    font-weight: 500;
    text-align: left;
}

.index-diff {
    display: flex;
    align-items: center;
    justify-content: flex-end;
    gap: 20px;
}

/* Bottom navigation */
.bottom-nav {
    display: flex;
    align-items: center;
    height: 179px;
    padding-left: 18px;
}

.menu-btn {
    display: flex;
    flex-direction: column;
    align-items: center;
    justify-content: center;
    flex: none;
    gap: 6px;
    width: 143px;
    height: 143px;
    border-radius: 14px;
    background-color: #b33a6b;
    color: #fff;
    font-size: 30px;
    line-height: 36px;
    font-weight: 700;
}

.links {
    display: flex;
    gap: 66px;
    flex: 1;
    margin: 0 14px 0 76px;
    overflow: hidden;
    color: #999;
    font-size: 39px;
    line-height: 56px;
    font-weight: 500;
    white-space: nowrap;
    mask-image: linear-gradient(to left, transparent, #000 20px);
}

.links .active {
    color: #333;
    font-weight: 700;
}

.home-bar {
    display: flex;
    justify-content: center;
    align-items: center;
    height: 45px;
    background-color: #f5f5f5;
}

.home-bar span {
    width: 30%;
    height: 12px;
    border-radius: 6px;
    background-color: #aaa;
}
```
